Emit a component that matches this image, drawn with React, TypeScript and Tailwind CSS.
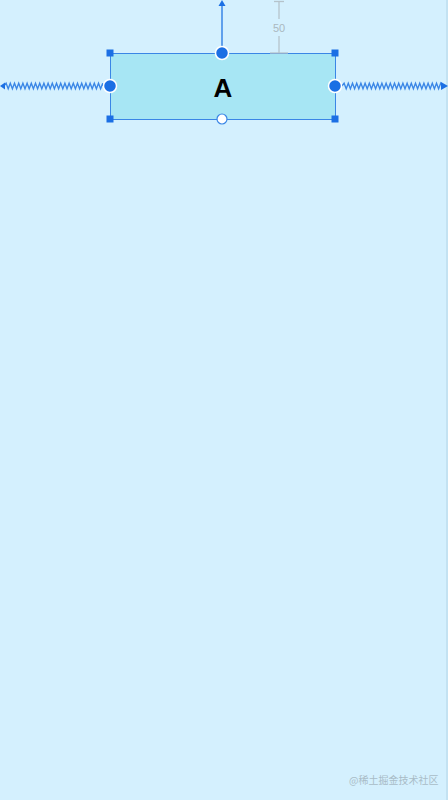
import React from "react";

function zigzag(x1: number, x2: number, y: number, period = 4.2, amp = 2.8) {
  let d = `M ${x1} ${y}`;
  let x = x1;
  let up = true;
  while (x + period / 2 <= x2) {
    x += period / 2;
    d += ` L ${x.toFixed(2)} ${up ? y - amp : y + amp}`;
    up = !up;
  }
  d += ` L ${x2} ${y}`;
  return d;
}

export default function App() {
  const blue = "#1b6fe4";
  const line = "#3a86e6";
  return (
    <div className="relative w-[448px] h-[800px] overflow-hidden bg-[#d4f0fe]">
      <div className="absolute right-0 top-0 h-full w-[2px] bg-[#c3e2f2]" />
      {/* node */}
      <div className="absolute left-[110px] top-[53px] w-[226px] h-[67px] border-[1.5px] border-[#3a86e6] bg-[#a7e6f4] flex items-center justify-center">
        <span className="text-[26px] font-bold text-black font-['Liberation_Sans',Arial,sans-serif] leading-none mt-[3px]">A</span>
      </div>
      <svg className="absolute left-0 top-0" width="448" height="800" viewBox="0 0 448 800">
        {/* dimension */}
        <g stroke="#b5c3cb" strokeWidth="1.3">
          <line x1="279" y1="2" x2="279" y2="19" />
          <line x1="279" y1="36" x2="279" y2="53" />
          <line x1="274" y1="1.5" x2="284" y2="1.5" />
          <line x1="270" y1="53" x2="288" y2="53" />
        </g>
        <text x="279" y="32" textAnchor="middle" fontSize="11" fill="#aab8c0" fontFamily="Liberation Sans, Arial, sans-serif">50</text>
        {/* top arrow */}
        <line x1="222" y1="53" x2="222" y2="4" stroke={line} strokeWidth="1.5" />
        <path d="M 222 0 L 218.5 6 L 225.5 6 Z" fill={blue} />
        {/* zigzags */}
        <path d={zigzag(4, 103, 86)} fill="none" stroke={line} strokeWidth="1.3" />
        <path d="M 0 86 L 5 82.5 L 5 89.5 Z" fill={blue} />
        <path d={zigzag(342, 442, 86)} fill="none" stroke={line} strokeWidth="1.3" />
        <path d="M 448 86 L 441 82 L 441 90 Z" fill={blue} />
        {/* corner handles */}
        {[
          [110, 53],
          [335, 53],
          [110, 119],
          [335, 119],
        ].map(([x, y], i) => (
          <rect key={i} x={x - 3.5} y={y - 3.5} width="7" height="7" fill={blue} />
        ))}
        {/* circle handles */}
        {[
          [110, 86],
          [335, 86],
          [222, 53],
        ].map(([x, y], i) => (
          <circle key={i} cx={x} cy={y} r="6.5" fill={blue} stroke="#ffffff" strokeWidth="1.5" />
        ))}
        <circle cx="222" cy="119" r="5" fill="#ffffff" stroke={line} strokeWidth="1.2" />
      </svg>
      <div className="absolute left-[349px] top-[775px] text-[10px] text-[#a9bcc7] font-['Noto_Sans_CJK_SC',sans-serif] leading-none">
        @稀土掘金技术社区
      </div>
    </div>
  );
}
